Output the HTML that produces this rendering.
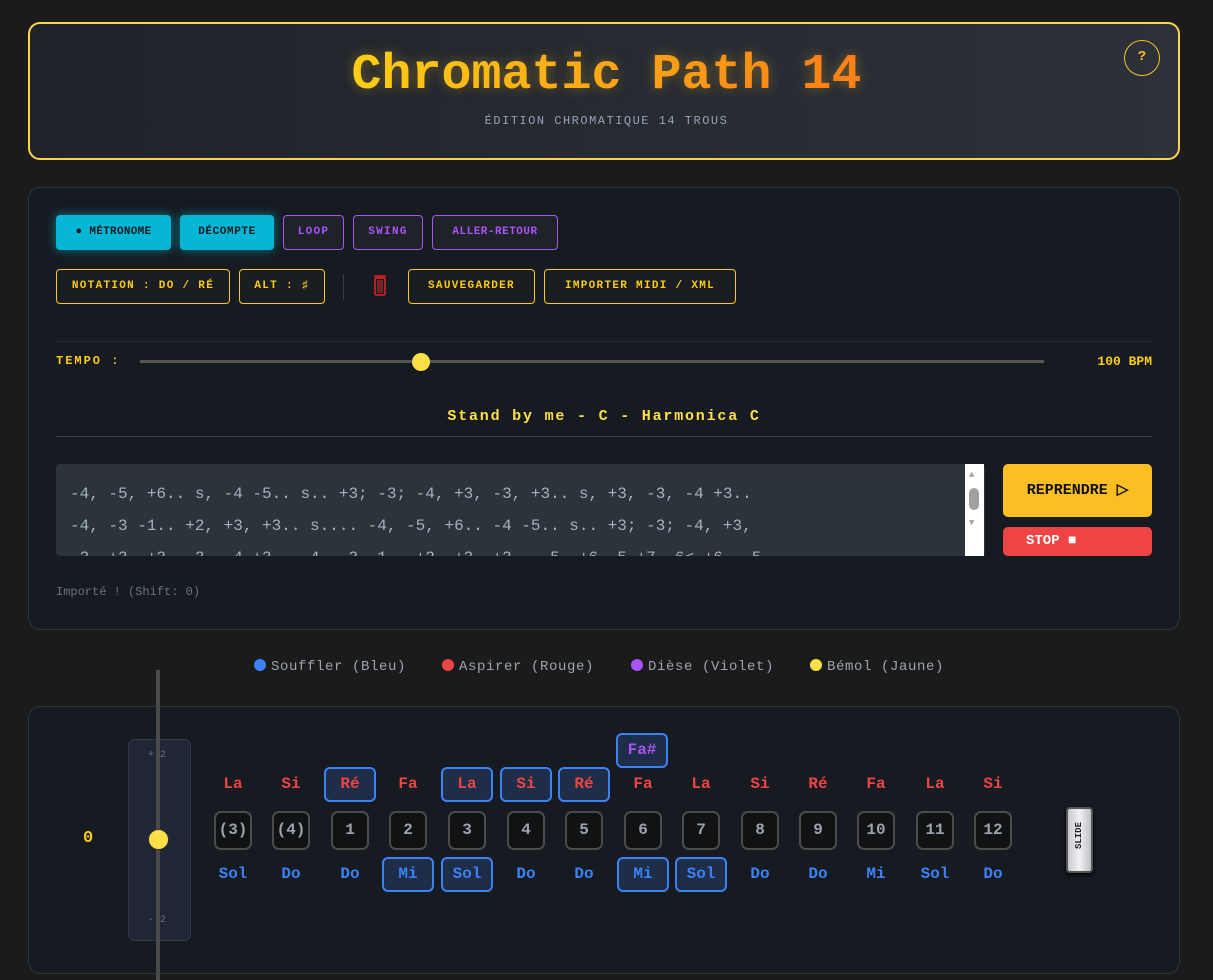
<!DOCTYPE html>
<html><head><meta charset="utf-8"><style>
*{box-sizing:border-box;margin:0;padding:0}
body{width:1213px;height:978px;background:#1b1b1c;font-family:"Liberation Mono",monospace;position:relative;overflow:hidden}
.a{position:absolute}
.hdr{left:28px;top:22px;width:1152px;height:138px;border:2px solid #fcd34d;border-radius:12px;background:linear-gradient(90deg,#1f2329,#2d3139)}
.title{left:0;width:1213px;top:47px;text-align:center;font-size:50px;font-weight:bold;line-height:58px}
.title span{background:linear-gradient(90deg,#fcd116,#f97316);-webkit-background-clip:text;color:transparent;text-shadow:0 0 12px rgba(251,191,36,.35)}
.sub{left:0;width:1213px;top:114px;text-align:center;font-size:12px;color:#94a3b8;letter-spacing:1.5px}
.help{left:1124px;top:40px;width:36px;height:36px;border:1.5px solid #fbbf24;border-radius:50%;color:#fbbf24;font-size:14px;font-weight:bold;text-align:center;line-height:33px}
.panel{left:28px;width:1152px;background:#161b22;border:1px solid #2f353d;border-radius:12px}
.btn{height:35px;border-radius:4px;font-size:11px;font-weight:bold;text-align:center;line-height:33px;border:1px solid;letter-spacing:1.3px;white-space:nowrap}
.cy{background:#06b6d4;border-color:#06b6d4;color:#0b1a1f;box-shadow:0 0 10px rgba(6,182,212,.6)}
.pu{background:#1f2229;border-color:#a855f7;color:#a855f7}
.ye{background:#1a1d22;border-color:#facc15;color:#facc15}
.hole{width:38px;height:39px;border:2px solid #4b4b4b;border-radius:7px;background:#111214;color:#9ca3af;font-size:16px;font-weight:bold;text-align:center;line-height:35px}
.n{font-size:16px;font-weight:bold;text-align:center;width:52px;height:35px;line-height:31px;border:2px solid transparent}
.r{color:#ef4444}.b{color:#3b82f6}
.hl{border:2px solid #3b82f6;border-radius:6px;background:#1e2d48}
.leg{top:659px;font-size:14px;color:#9ca3af;letter-spacing:0.6px}
.dot{display:inline-block;width:12px;height:12px;border-radius:50%;vertical-align:-1px;margin-right:5px}
</style></head><body>
<div class="a hdr"></div>
<div class="a title"><span>Chromatic Path 14</span></div>
<div class="a sub">ÉDITION CHROMATIQUE 14 TROUS</div>
<div class="a help">?</div>

<div class="a panel" style="top:187px;height:443px"></div>
<div class="a btn cy" style="left:56px;top:215px;width:115px;letter-spacing:0.3px">● MÉTRONOME</div>
<div class="a btn cy" style="left:180px;top:215px;width:94px;letter-spacing:0.6px">DÉCOMPTE</div>
<div class="a btn pu" style="left:283px;top:215px;width:61px">LOOP</div>
<div class="a btn pu" style="left:353px;top:215px;width:70px">SWING</div>
<div class="a btn pu" style="left:432px;top:215px;width:126px;letter-spacing:0.5px">ALLER-RETOUR</div>
<div class="a btn ye" style="left:56px;top:269px;width:174px">NOTATION : DO / RÉ</div>
<div class="a btn ye" style="left:239px;top:269px;width:86px">ALT : ♯</div>
<div class="a" style="left:343px;top:274px;width:1px;height:26px;background:#3a3f47"></div>
<svg class="a" style="left:372px;top:274px" width="16" height="22" viewBox="0 0 16 22"><rect x="2" y="1" width="12" height="3" rx="1" fill="#b91c1c"/><rect x="3" y="4" width="10" height="17" rx="1.5" fill="none" stroke="#dc2626" stroke-width="1.5"/><path d="M6 6v13M8 6v13M10 6v13" stroke="#dc2626"/></svg>
<div class="a btn ye" style="left:408px;top:269px;width:127px">SAUVEGARDER</div>
<div class="a btn ye" style="left:544px;top:269px;width:192px">IMPORTER MIDI / XML</div>
<div class="a" style="left:56px;top:341px;width:1096px;height:1px;background:#262b33"></div>
<div class="a" style="left:56px;top:354px;font-size:12px;font-weight:bold;color:#facc15;letter-spacing:2px">TEMPO :</div>
<div class="a" style="left:140px;top:360px;width:904px;height:3px;background:#555"></div>
<div class="a" style="left:412px;top:353px;width:18px;height:18px;border-radius:50%;background:#fde047"></div>
<div class="a" style="left:1060px;top:354px;width:92px;text-align:right;font-size:13px;font-weight:bold;color:#facc15">100 BPM</div>
<div class="a" style="left:56px;top:408px;width:1096px;text-align:center;font-size:15px;font-weight:bold;color:#fde047;letter-spacing:1.8px">Stand by me - C - Harmonica C</div>
<div class="a" style="left:56px;top:436px;width:1096px;height:1px;background:#3b3f45"></div>
<div class="a" style="left:56px;top:464px;width:929px;height:92px;background:#2d333b;border-radius:4px;overflow:hidden;color:#a3b1c2;font-size:16px;line-height:32px;padding:14px 0 0 14px;white-space:pre">-4, -5, +6.. s, -4 -5.. s.. +3; -3; -4, +3, -3, +3.. s, +3, -3, -4 +3..
-4, -3 -1.. +2, +3, +3.. s.... -4, -5, +6.. -4 -5.. s.. +3; -3; -4, +3,
-3, +3, +3, -3, -4 +3.. -4, -3 -1.. +2, +3, +3.. -5, +6, 5 +7, 6< +6, -5</div>
<div class="a" style="left:965px;top:464px;width:19px;height:92px;background:#fff"></div>
<div class="a" style="left:969px;top:488px;width:10px;height:22px;border-radius:5px;background:#a0a0a0"></div>
<div class="a" style="left:969px;top:470px;color:#a0a0a0;font-size:9px">▲</div>
<div class="a" style="left:969px;top:518px;color:#a0a0a0;font-size:9px">▼</div>
<div class="a" style="left:1003px;top:464px;width:149px;height:53px;background:#fbbf24;border-radius:5px;color:#111;font-size:15px;font-weight:bold;text-align:center;line-height:53px">REPRENDRE ▷</div>
<div class="a" style="left:1003px;top:527px;width:149px;height:29px;background:#ef4444;border-radius:5px;color:#fff;font-size:14px;font-weight:bold;line-height:28px;padding-left:23px">STOP ■</div>
<div class="a" style="left:56px;top:585px;font-size:12px;color:#6b7280">Importé ! (Shift: 0)</div>

<div class="a leg" style="left:254px"><span class="dot" style="background:#3b82f6"></span>Souffler (Bleu)</div>
<div class="a leg" style="left:442px"><span class="dot" style="background:#ef4444"></span>Aspirer (Rouge)</div>
<div class="a leg" style="left:631px"><span class="dot" style="background:#a855f7"></span>Dièse (Violet)</div>
<div class="a leg" style="left:810px"><span class="dot" style="background:#fde047"></span>Bémol (Jaune)</div>

<div class="a panel" style="top:706px;height:268px"></div>
<div class="a" style="left:83px;top:829px;font-size:17px;font-weight:bold;color:#facc15">0</div>
<div class="a" style="left:128px;top:739px;width:63px;height:202px;background:#1f2736;border:1px solid #313a4a;border-radius:7px"></div>
<div class="a" style="left:148px;top:750px;font-size:10px;color:#6b7280">+ 2</div>
<div class="a" style="left:148px;top:915px;font-size:10px;color:#6b7280">- 2</div>
<div class="a" style="left:156px;top:670px;width:4px;height:310px;background:#4a4a4a"></div>
<div class="a" style="left:148px;top:829px;width:21px;height:21px;border-radius:50%;background:#fde047;border:1px solid #333"></div>

<div class="a n hl" style="left:616px;top:733px;color:#a855f7">Fa#</div>
<div id="g"></div>
<div class="a" style="left:1066px;top:807px;width:27px;height:66px;border:2px solid #555;border-radius:4px;background:linear-gradient(90deg,#c9c9d1,#f1f1f5,#bdbdc5);box-shadow:0 2px 4px #000"><div style="writing-mode:vertical-rl;transform:rotate(180deg);font-size:9px;font-weight:bold;color:#222;position:absolute;left:6px;top:13px">SLIDE</div></div>
<script>
(function(){
var xs=[233,291,350,408,467,526,584,643,701,760,818,876,935,993];
var tp=["La","Si","Ré","Fa","La","Si","Ré","Fa","La","Si","Ré","Fa","La","Si"];
var bt=["Sol","Do","Do","Mi","Sol","Do","Do","Mi","Sol","Do","Do","Mi","Sol","Do"];
var num=["(3)","(4)","1","2","3","4","5","6","7","8","9","10","11","12"];
var th=[2,4,5,6],bh=[3,4,7,8],h="";
for(var i=0;i<14;i++){var x=xs[i];
h+='<div class="a n r'+(th.indexOf(i)>=0?' hl':'')+'" style="left:'+(x-26)+'px;top:767px">'+tp[i]+'</div>';
h+='<div class="a hole" style="left:'+(x-19)+'px;top:811px">'+num[i]+'</div>';
h+='<div class="a n b'+(bh.indexOf(i)>=0?' hl':'')+'" style="left:'+(x-26)+'px;top:857px">'+bt[i]+'</div>';}
document.getElementById("g").innerHTML=h;
})();
</script>
</body></html>
